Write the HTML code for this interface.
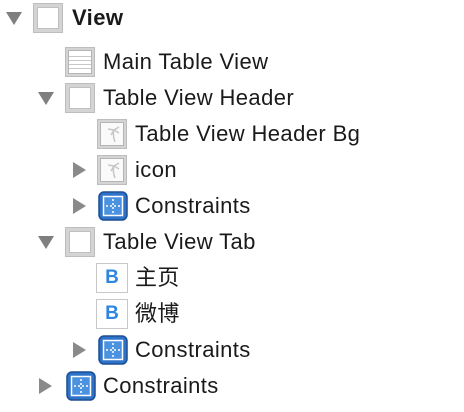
<!DOCTYPE html>
<html><head><meta charset="utf-8"><style>
html,body{margin:0;padding:0;background:#fff;width:464px;height:412px;overflow:hidden;position:relative}
.t{position:absolute;font-family:"Liberation Sans","Noto Sans CJK SC",sans-serif;font-size:22px;letter-spacing:0.4px;color:#1a1a1a;line-height:24px;white-space:nowrap}
.tri{position:absolute;width:0;height:0}
.down{border-left:8px solid transparent;border-right:8px solid transparent;border-top:13px solid #7f7f7f}
.right{border-top:8px solid transparent;border-bottom:8px solid transparent;border-left:13px solid #8a8a8a}
.box{position:absolute;width:30px;height:30px;box-sizing:border-box;background:#d4d4d4;border:1px solid #bdbdbd}
.box:after{content:"";position:absolute;left:3px;top:3px;right:3px;bottom:3px;background:#fff;border:1px solid #c0c0c0}
.b{position:absolute;width:32px;height:30px;box-sizing:border-box;border:1px solid #c8c8c8;background:#fff;color:#2f86e0;font:bold 19px "Liberation Sans",sans-serif;text-align:center;line-height:28px}
.c{position:absolute;width:30px;height:30px}
</style></head><body>
<svg width="0" height="0" style="position:absolute"><defs>
<symbol id="con" viewBox="0 0 30 30"><rect x="1" y="1" width="28" height="28" rx="5" fill="#2f73c8" stroke="#1b4f96" stroke-width="1.5"/><rect x="5.5" y="5.5" width="19" height="19" fill="#4b92e0" stroke="#fff" stroke-width="1.5"/><path d="M15 8v14M8 15h14" stroke="#fff" stroke-width="1.5" stroke-dasharray="2 2"/></symbol>
<symbol id="img" viewBox="0 0 30 30"><rect x="0.5" y="0.5" width="29" height="29" fill="#d4d4d4" stroke="#bdbdbd"/><rect x="3.5" y="3.5" width="23" height="23" fill="#fafafa" stroke="#b5b5b5"/><path d="M17 10c-1 4-1 8 1 13M11 10l6 1M17 11l5-3M17 11l5 3M17 11l-3 5" stroke="#c6c6c6" stroke-width="1.5" fill="none"/></symbol>
</defs></svg>

<div class="tri down" style="left:6px;top:12px"></div>
<div class="box" style="left:33px;top:3px"></div>
<div class="t" style="left:72px;top:6px;font-weight:bold">View</div>

<svg class="c" style="left:65px;top:47px" viewBox="0 0 30 30"><rect x="0.5" y="0.5" width="29" height="29" fill="#d4d4d4" stroke="#bdbdbd"/><rect x="3.5" y="3.5" width="23" height="23" fill="#fff" stroke="#b5b5b5"/><path d="M4 9.5h22M4 13.5h22M4 17.5h22M4 21.5h22" stroke="#c8c8c8"/></svg>
<div class="t" style="left:103px;top:50px">Main Table View</div>

<div class="tri down" style="left:38px;top:92px"></div>
<div class="box" style="left:65px;top:83px"></div>
<div class="t" style="left:103px;top:86px">Table View Header</div>

<svg class="c" style="left:97px;top:119px"><use href="#img"/></svg>
<div class="t" style="left:135px;top:122px">Table View Header Bg</div>

<div class="tri right" style="left:73px;top:162px"></div>
<svg class="c" style="left:97px;top:155px"><use href="#img"/></svg>
<div class="t" style="left:135px;top:158px">icon</div>

<div class="tri right" style="left:73px;top:198px"></div>
<svg class="c" style="left:98px;top:191px"><use href="#con"/></svg>
<div class="t" style="left:135px;top:194px">Constraints</div>

<div class="tri down" style="left:38px;top:236px"></div>
<div class="box" style="left:65px;top:227px"></div>
<div class="t" style="left:103px;top:230px">Table View Tab</div>

<div class="b" style="left:96px;top:263px">B</div>
<div class="t" style="left:135px;top:266px">主页</div>

<div class="b" style="left:96px;top:299px">B</div>
<div class="t" style="left:135px;top:302px">微博</div>

<div class="tri right" style="left:73px;top:342px"></div>
<svg class="c" style="left:98px;top:335px"><use href="#con"/></svg>
<div class="t" style="left:135px;top:338px">Constraints</div>

<div class="tri right" style="left:39px;top:378px"></div>
<svg class="c" style="left:66px;top:371px"><use href="#con"/></svg>
<div class="t" style="left:103px;top:374px">Constraints</div>
</body></html>
